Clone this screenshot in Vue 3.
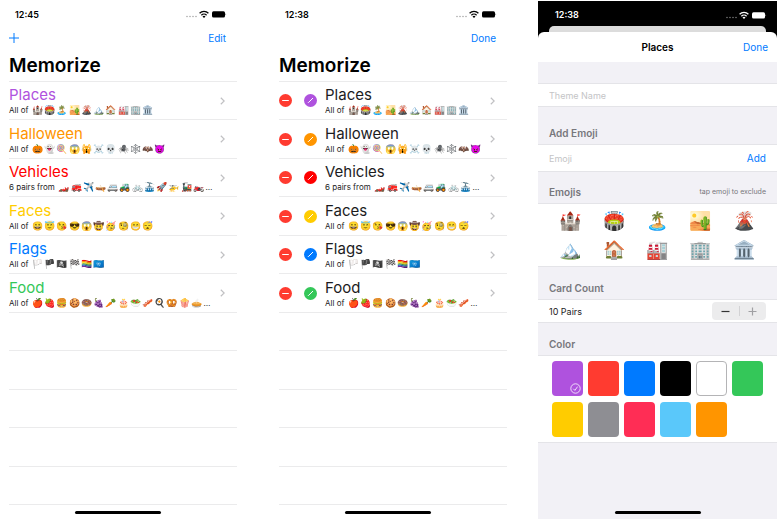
<script setup>
import { ref, computed } from 'vue'

const themes = [
  { name: 'Places', tint: 'purple', label: 'All of', emojis: ['🏰', '🏟️', '🏝️', '🏜️', '🌋', '🏔️', '🏠', '🏭', '🏢', '🏛️'] },
  { name: 'Halloween', tint: 'orange', label: 'All of', emojis: ['🎃', '👻', '🍭', '😱', '🙀', '☠️', '💀', '🕷️', '🕸️', '🦇', '😈'] },
  { name: 'Vehicles', tint: 'pure-red', label: '6 pairs from', emojis: ['🏎️', '🚒', '✈️', '🛶', '🚐', '🚜', '🚲', '🚠', '🚀', '🚁', '🚂', '🏍️', '🚗', '🚕'] },
  { name: 'Faces', tint: 'yellow', label: 'All of', emojis: ['😀', '😇', '😘', '😎', '😱', '🤠', '🥳', '🧐', '😁', '😴'] },
  { name: 'Flags', tint: 'blue', label: 'All of', emojis: ['🏳️', '🏴', '🏴‍☠️', '🏁', '🏳️‍🌈', '🇺🇳'] },
  { name: 'Food', tint: 'green', label: 'All of', emojis: ['🍎', '🍓', '🍔', '🍪', '🍩', '🍇', '🥕', '🎂', '🥗', '🥓', '🍳', '🥨', '🍿', '🥧', '🍕', '🍟'] }
]

const phones = [
  { time: '12:45', action: 'Edit', editing: false },
  { time: '12:38', action: 'Done', editing: true }
]

// A long label or the edit controls leave room for fewer emojis in a row.
function capacity(theme, phone) {
  const longLabel = theme.label.length > 8
  if (phone.editing) return longLabel ? 8 : theme.emojis.length > 11 ? 10 : 11
  return longLabel ? 12 : 14
}

const colors = ['purple', 'red', 'blue', 'black', 'white', 'green', 'yellow', 'gray', 'pink', 'sky', 'orange']
const selected = ref('purple')
const themeName = ref('')
const newEmoji = ref('')
const emojis = ref([...themes[0].emojis])
const pairs = ref(10)
const canAdd = computed(() => pairs.value < emojis.value.length)

function addEmoji() {
  if (newEmoji.value) emojis.value.push(newEmoji.value)
  newEmoji.value = ''
}
</script>

<template>
  <main class="board">
    <section v-for="phone in phones" :key="phone.time" class="phone">
      <div class="status">
        <span class="time">{{ phone.time }}</span>
        <svg class="signals" viewBox="0 0 42 10" aria-hidden="true">
          <g class="dots"><circle cx="2" cy="7.5" r=".8" /><circle cx="5" cy="7.5" r=".8" /><circle cx="8" cy="7.5" r=".8" /><circle cx="11" cy="7.5" r=".8" /></g>
          <path class="wave" d="M14.6 4.2a6.2 6.2 0 0 1 8.8 0M16.4 6.2a3.7 3.7 0 0 1 5.2 0" />
          <path d="M17.5 7.5a2.2 2.2 0 0 1 3 0L19 9z" />
          <rect x="27" y="2.2" width="13" height="6.3" rx="1.5" /><path d="M40.6 4.2q1 1.1 0 2.2z" />
        </svg>
      </div>
      <nav class="bar">
        <button v-if="!phone.editing" class="link plus" aria-label="Add theme">
          <svg viewBox="0 0 10 10"><path d="M5 0v10M0 5h10" /></svg>
        </button>
        <button class="link end">{{ phone.action }}</button>
      </nav>
      <h1>Memorize</h1>
      <ul class="list">
        <li v-for="theme in themes" :key="theme.name" class="row">
          <template v-if="phone.editing">
            <button class="round remove" :aria-label="'Delete ' + theme.name">
              <svg viewBox="0 0 13 13"><circle cx="6.5" cy="6.5" r="6.5" /><path d="M3.2 6.5h6.6" /></svg>
            </button>
            <button class="round pencil" :class="theme.tint" :aria-label="'Edit ' + theme.name">
              <svg viewBox="0 0 13 13"><circle cx="6.5" cy="6.5" r="6.5" /><path d="M4 9l.5-.8M4.8 8.2 9 4" /></svg>
            </button>
          </template>
          <div class="info">
            <h2 :class="phone.editing ? 'plain' : theme.tint">{{ theme.name }}</h2>
            <p>
              <span class="count">{{ theme.label }}</span>
              <span v-for="emoji in theme.emojis.slice(0, capacity(theme, phone))" :key="emoji" class="emoji">{{ emoji }}</span>
              <span v-if="theme.emojis.length > capacity(theme, phone)">…</span>
            </p>
          </div>
          <svg class="chevron" viewBox="0 0 5 8" aria-hidden="true"><path d="M.8.7 4.2 4 .8 7.3" /></svg>
        </li>
        <li v-for="n in 5" :key="n" class="row" aria-hidden="true"></li>
      </ul>
      <div class="home"></div>
    </section>

    <section class="phone editor">
      <div class="status dark">
        <span class="time">12:38</span>
        <svg class="signals" viewBox="0 0 42 10" aria-hidden="true">
          <g class="dots"><circle cx="2" cy="7.5" r=".8" /><circle cx="5" cy="7.5" r=".8" /><circle cx="8" cy="7.5" r=".8" /><circle cx="11" cy="7.5" r=".8" /></g>
          <path class="wave" d="M14.6 4.2a6.2 6.2 0 0 1 8.8 0M16.4 6.2a3.7 3.7 0 0 1 5.2 0" />
          <path d="M17.5 7.5a2.2 2.2 0 0 1 3 0L19 9z" />
          <rect x="27" y="2.2" width="13" height="6.3" rx="1.5" /><path d="M40.6 4.2q1 1.1 0 2.2z" />
        </svg>
      </div>
      <div class="behind"></div>
      <header class="sheet-bar">
        <h2>Places</h2>
        <button class="link">Done</button>
      </header>
      <form class="form" @submit.prevent="addEmoji">
        <div class="caption first"></div>
        <div class="cell field"><input v-model="themeName" aria-label="Theme Name" placeholder="Theme Name" /></div>
        <div class="caption tall"><label for="new-emoji">Add Emoji</label></div>
        <div class="cell field entry">
          <input id="new-emoji" v-model="newEmoji" placeholder="Emoji" />
          <button class="link">Add</button>
        </div>
        <div class="caption short"><h3>Emojis</h3><small>tap emoji to exclude</small></div>
        <div class="cell emojis">
          <button v-for="emoji in emojis" :key="emoji" type="button" class="emoji">{{ emoji }}</button>
        </div>
        <div class="caption"><h3>Card Count</h3></div>
        <div class="cell field">
          <span>{{ pairs }} Pairs</span>
          <div class="stepper">
            <button type="button" aria-label="Fewer pairs" @click="pairs--"><svg viewBox="0 0 9 9"><path d="M.5 4.5h8" /></svg></button>
            <button type="button" aria-label="More pairs" :disabled="!canAdd" @click="pairs++"><svg viewBox="0 0 9 9"><path d="M.5 4.5h8M4.5.5v8" /></svg></button>
          </div>
        </div>
        <div class="caption"><h3>Color</h3></div>
        <div class="cell swatches">
          <button v-for="color in colors" :key="color" type="button" class="swatch" :class="color" :aria-label="color" @click="selected = color">
            <svg v-if="selected === color" viewBox="0 0 11 11"><circle cx="5.5" cy="5.5" r="4.7" /><path d="M3.4 5.8 4.9 7.4 7.6 3.6" /></svg>
          </button>
        </div>
      </form>
      <div class="home"></div>
    </section>
  </main>
</template>

<style>
body { margin: 0; background: #fff; overflow-x: hidden; }
</style>

<style scoped>
.board {
  --purple: #af52de; --red: #ff3b30; --pure-red: #ff0000; --blue: #007aff; --green: #34c759;
  --yellow: #ffcc00; --orange: #ff9500;
  display: grid;
  grid-template-columns: repeat(3, minmax(0, 1fr));
  gap: 31px;
  margin-left: -2px;
  color: #1c1c1e;
  font-family: Inter, "Liberation Sans", sans-serif;
  font-size: 10px;
}
.board * { box-sizing: border-box; }
h1, h2, h3, p, ul { margin: 0; padding: 0; }
button { border: 0; padding: 0; background: none; font: inherit; color: inherit; display: block; }
svg { display: block; fill: none; }
.phone { display: flex; flex-direction: column; padding-bottom: 6px; }
.status { display: flex; justify-content: space-between; align-items: center; height: 28px; padding: 0 10px 0 17px; }
.time { font-size: 9px; font-weight: 600; color: #000; }
.signals { width: 42px; height: 10px; fill: #000; }
.dots { fill: #aaa; }
.wave { fill: none; stroke: #000; stroke-width: 1.3; }
.bar { display: flex; align-items: center; height: 20px; padding: 0 11px; }
.link { color: var(--blue); font-size: 10px; }
.end { margin-left: auto; }
.plus svg { width: 10px; height: 10px; stroke: var(--blue); }
h1 { height: 33px; padding: 5px 11px 0; font-size: 19px; line-height: 25px; font-weight: 600; color: #000; }
.list { list-style: none; margin-left: 11px; border-top: 1px solid #ebebec; }
.row { display: flex; align-items: center; height: 38px; padding-right: 12px; border-bottom: 1px solid #ebebec; }
.row:nth-child(even) { height: 39px; }
.info { flex: 1; min-width: 0; padding-top: 1px; }
.info h2 { font-size: 15px; line-height: 19px; font-weight: 400; }
.info p { display: flex; align-items: center; gap: 1px; height: 13px; font-size: 8px; line-height: 13px; white-space: nowrap; }
.count { margin-right: 3px; }
.info .emoji { font-size: 9px; }
.emoji { font-family: "Noto Color Emoji", "Noto Sans", sans-serif; }
.chevron { width: 5px; height: 8px; stroke: #c0c0c3; stroke-width: 1.2; }
.round { width: 13px; height: 13px; flex: none; }
.round svg { width: 13px; height: 13px; stroke: #fff; }
.round circle { stroke: none; fill: currentColor; }
.remove { color: var(--red); margin-right: 12px; }
.pencil { margin-right: 8px; }
.purple { color: var(--purple); }
.orange { color: var(--orange); }
.pure-red { color: var(--pure-red); }
.yellow { color: var(--yellow); }
.blue { color: var(--blue); }
.green { color: var(--green); }
.home { width: 86px; height: 3px; margin: 6px auto 0; border-radius: 2px; background: #000; }

.editor { margin: 1px 0 1px; padding-bottom: 5px; background: linear-gradient(#000 40px, #f2f1f6 40px); }
.dark { height: 25px; padding-top: 2px; }
.dark .time { color: #fff; }
.dark .signals { fill: #fff; }
.dark .wave { stroke: #fff; }
.dark .dots { fill: #777; }
.behind { height: 6px; margin: 0 11px; border-radius: 5px 5px 0 0; background: #dcdcdc; }
.sheet-bar { display: grid; grid-template-columns: 1fr auto 1fr; align-items: center; height: 30px; padding: 0 9px; border-radius: 6px 6px 0 0; background: #fff; }
.sheet-bar h2 { grid-column: 2; font-size: 10px; font-weight: 600; color: #000; }
.sheet-bar .link { justify-self: end; }
.caption { display: flex; justify-content: space-between; align-items: center; height: 32px; padding: 9px 11px 0; color: #77777c; font-size: 10px; line-height: 12px; font-weight: 600; }
.caption h3 { font-size: 10px; font-weight: 600; }
.caption small { font-size: 7px; font-weight: 400; }
.first { height: 21px; }
.short { height: 31px; }
.tall { height: 37px; padding-top: 15px; }
.cell { background: #fff; border-top: 1px solid #e4e4e8; border-bottom: 1px solid #e4e4e8; }
.field { display: flex; justify-content: space-between; align-items: center; height: 24px; padding: 0 11px; font-size: 9px; }
.entry { height: 28px; }
input { flex: 1; min-width: 0; border: 0; padding: 0; background: none; font: inherit; outline: 0; }
input::placeholder { color: #c4c4c6; opacity: 1; }
.emojis { display: grid; grid-template-columns: repeat(5, 1fr); grid-auto-rows: 29px; padding: 2px 11px; }
.emojis .emoji { font-size: 18px; line-height: 29px; text-align: center; }
.stepper { display: flex; width: 54px; height: 18px; border-radius: 4px; background: #ececed; }
.stepper button { flex: 1; display: grid; place-items: center; margin: 4px 0; }
.stepper button + button { border-left: 1px solid #d2d2d4; }
.stepper svg { width: 9px; height: 9px; stroke: #333; stroke-width: 1.2; }
.stepper button:disabled svg { stroke: #a0a0a3; }
.swatches { display: grid; grid-template-columns: repeat(6, 1fr); grid-auto-rows: 35px; gap: 6px 5px; height: 88px; padding: 5px 14px; }
.swatch { display: flex; justify-content: flex-end; align-items: flex-end; padding: 2px; border-radius: 4px; background: currentColor; }
.swatch svg { width: 11px; height: 11px; stroke: #fff; stroke-width: .8; }
.swatch.red { color: var(--red); }
.swatch.black { color: #000; }
.swatch.white { color: #fff; border: 1px solid #b4b4b6; }
.swatch.gray { color: #8e8e93; }
.swatch.pink { color: #ff2d55; }
.swatch.sky { color: #5ac8fa; }
.editor .home { margin-top: auto; }
</style>
